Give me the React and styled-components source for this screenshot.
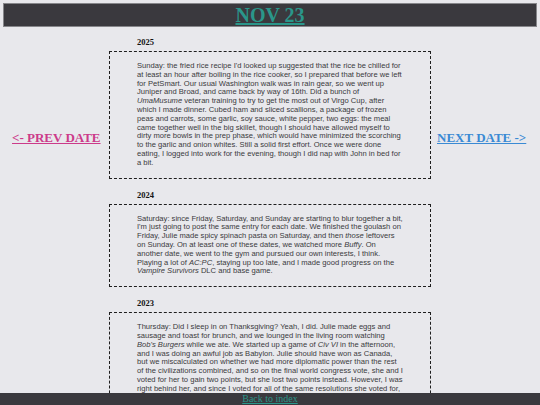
import React from "react";
import styled, { createGlobalStyle } from "styled-components";

const GlobalStyle = createGlobalStyle`
  html, body {
    margin: 0;
    padding: 0;
    background: #e8e8ec;
  }
  body {
    font-family: "Liberation Serif", "Times New Roman", serif;
    overflow: hidden;
  }
`;

const TopBar = styled.header`
  margin: 3px 3px 0;
  height: 22px;
  background: #3a393e;
  border: 1px solid #86868a;
  text-align: center;
  font-size: 20px;
  line-height: 22px;
`;

const Title = styled.a`
  font-family: "Liberation Serif", serif;
  font-weight: bold;
  color: #2a968a;
  text-decoration: underline;
`;

const Layout = styled.main`
  display: grid;
  grid-template-columns: 109px 322px 1fr;
  align-items: start;
`;

const Side = styled.div`
  padding-top: ${(p) => p.$top}px;
  padding-left: ${(p) => p.$left}px;
  font-size: 13px;
  line-height: 15px;
`;

const DateLink = styled.a`
  font-family: "Liberation Serif", serif;
  font-weight: bold;
  color: ${(p) => p.$color};
  text-decoration: underline;
  white-space: nowrap;
`;

const Entries = styled.section`
  padding-top: 10px;
`;

const Entry = styled.article`
  margin-bottom: 11px;
`;

const Year = styled.h3`
  margin: 0 0 4px;
  padding-left: 28px;
  font-family: "Liberation Serif", serif;
  font-size: 8.5px;
  font-weight: bold;
  line-height: 10px;
  color: #141414;
`;

const Box = styled.div`
  border: 1px dashed #1e1e1e;
  padding: 10px 27px 10px 27px;
  font-family: "Liberation Sans", Arial, sans-serif;
  font-size: 7.6px;
  line-height: 8.8px;
  color: #3a3a3c;
`;

const Footer = styled.footer`
  position: fixed;
  left: 0;
  right: 0;
  bottom: 0;
  height: 12px;
  background: #3a393e;
  text-align: center;
  font-size: 10px;
  line-height: 12px;
`;

const BackLink = styled.a`
  font-family: "Liberation Serif", serif;
  color: #2a968a;
  text-decoration: underline;
`;

const entries = [
  {
    year: "2025",
    body: (
      <>
        Sunday: the fried rice recipe I'd looked up suggested that the rice be
        chilled for at least an hour after boiling in the rice cooker, so I
        prepared that before we left for PetSmart. Our usual Washington walk was
        in rain gear, so we went up Juniper and Broad, and came back by way of
        16th. Did a bunch of <i>UmaMusume</i> veteran training to try to get the
        most out of Virgo Cup, after which I made dinner. Cubed ham and sliced
        scallions, a package of frozen peas and carrots, some garlic, soy sauce,
        white pepper, two eggs: the meal came together well in the big skillet,
        though I should have allowed myself to dirty more bowls in the prep
        phase, which would have minimized the scorching to the garlic and onion
        whites. Still a solid first effort. Once we were done eating, I logged
        into work for the evening, though I did nap with John in bed for a bit.
      </>
    ),
  },
  {
    year: "2024",
    body: (
      <>
        Saturday: since Friday, Saturday, and Sunday are starting to blur
        together a bit, I'm just going to post the same entry for each date. We
        finished the goulash on Friday, Julie made spicy spinach pasta on
        Saturday, and then <i>those</i> leftovers on Sunday. On at least one of
        these dates, we watched more <i>Buffy</i>. On another date, we went to
        the gym and pursued our own interests, I think. Playing a lot of{" "}
        <i>AC:PC</i>, staying up too late, and I made good progress on the{" "}
        <i>Vampire Survivors</i> DLC and base game.
      </>
    ),
  },
  {
    year: "2023",
    body: (
      <>
        Thursday: Did I sleep in on Thanksgiving? Yeah, I did. Julie made eggs
        and sausage and toast for brunch, and we lounged in the living room
        watching <i>Bob's Burgers</i> while we ate. We started up a game of{" "}
        <i>Civ VI</i> in the afternoon, and I was doing an awful job as Babylon.
        Julie should have won as Canada, but we miscalculated on whether we had
        more diplomatic power than the rest of the civilizations combined, and
        so on the final world congress vote, she and I voted for her to gain two
        points, but she lost two points instead. However, I was right behind
        her, and since I voted for all of the same resolutions she voted for, I
        took the win instead.
      </>
    ),
  },
];

const App = () => {
  return (
    <>
      <GlobalStyle />
      <TopBar>
        <Title href="#">NOV 23</Title>
      </TopBar>
      <Layout>
        <Side $top={103} $left={12}>
          <DateLink href="#" $color="#cc3a8a">
            &lt;- PREV DATE
          </DateLink>
        </Side>
        <Entries>
          {entries.map((e) => (
            <Entry key={e.year}>
              <Year>{e.year}</Year>
              <Box>{e.body}</Box>
            </Entry>
          ))}
        </Entries>
        <Side $top={103} $left={6}>
          <DateLink href="#" $color="#3a8ad4">
            NEXT DATE -&gt;
          </DateLink>
        </Side>
      </Layout>
      <Footer>
        <BackLink href="#">Back to index</BackLink>
      </Footer>
    </>
  );
};

export default App;
